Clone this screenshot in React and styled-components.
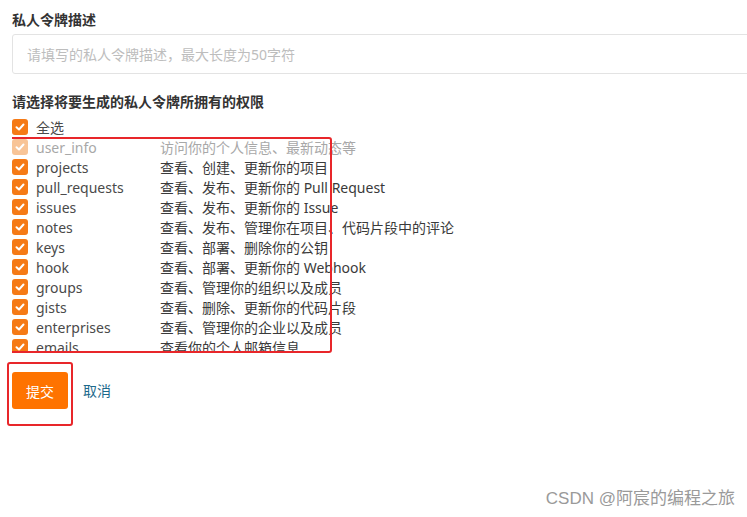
import styled, { createGlobalStyle } from 'styled-components';

const GlobalStyle = createGlobalStyle`
    body {
        margin : 0;
        background : #fff;
        font-family : "Noto Sans", "Noto Sans CJK SC", sans-serif;
        font-size : 14px;
        color : #333;
    }
`;

const perms = [
    { name: 'user_info', desc: '访问你的个人信息、最新动态等', disabled: true },
    { name: 'projects', desc: '查看、创建、更新你的项目' },
    { name: 'pull_requests', desc: '查看、发布、更新你的 Pull Request' },
    { name: 'issues', desc: '查看、发布、更新你的 Issue' },
    { name: 'notes', desc: '查看、发布、管理你在项目、代码片段中的评论' },
    { name: 'keys', desc: '查看、部署、删除你的公钥' },
    { name: 'hook', desc: '查看、部署、更新你的 Webhook' },
    { name: 'groups', desc: '查看、管理你的组织以及成员' },
    { name: 'gists', desc: '查看、删除、更新你的代码片段' },
    { name: 'enterprises', desc: '查看、管理你的企业以及成员' },
    { name: 'emails', desc: '查看你的个人邮箱信息' },
];

function Check({ disabled }) {
    return (
        <CheckBox $disabled={disabled}>
            <svg width="10" height="10" viewBox="0 0 10 10">
                <polyline points="1.5,5.2 4,7.5 8.5,2.5" fill="none" stroke="#fff" strokeWidth="2" strokeLinecap="round" strokeLinejoin="round" />
            </svg>
        </CheckBox>
    );
}

export default function App() {
    return (
        <Page>
            <GlobalStyle />
            <FieldLabel>私人令牌描述</FieldLabel>
            <TextInput type="text" placeholder="请填写的私人令牌描述，最大长度为50字符" />
            <FieldLabel $gap={18}>请选择将要生成的私人令牌所拥有的权限</FieldLabel>
            <Row $gap={5}>
                <Check />
                <Name>全选</Name>
            </Row>
            <PermList>
                {perms.map(p => (
                    <Row key={p.name}>
                        <Check disabled={p.disabled} />
                        <Name $muted={p.disabled}>{p.name}</Name>
                        <Desc $muted={p.disabled}>{p.desc}</Desc>
                    </Row>
                ))}
            </PermList>
            <Actions>
                <SubmitFrame>
                    <SubmitBtn>提交</SubmitBtn>
                </SubmitFrame>
                <CancelLink>取消</CancelLink>
            </Actions>
            <Watermark>CSDN @阿宸的编程之旅</Watermark>
        </Page>
    );
}

const Page = styled.div`
    position : relative;
    width : 747px;
    height : 517px;
    padding : 10px 0 0 12px;
    box-sizing : border-box;
    overflow : hidden;
`;

const FieldLabel = styled.div`
    font-weight : bold;
    line-height : 20px;
    color : #333;
    margin-top : ${p => p.$gap || 0}px;
`;

const TextInput = styled.input`
    display : block;
    margin-top : 4px;
    width : 760px;
    height : 40px;
    box-sizing : border-box;
    border : 1px solid #e3e3e3;
    border-radius : 3px;
    padding : 0 14px;
    font : inherit;
    background : #fff;
    outline : none;
    &::placeholder{
        color : #bdbdbd;
    }
`;

const Row = styled.div`
    display : flex;
    align-items : center;
    height : 20px;
    margin-top : ${p => p.$gap || 0}px;
`;

const CheckBox = styled.span`
    width : 16px;
    height : 16px;
    border-radius : 3px;
    background : ${p => p.$disabled ? '#f8c497' : '#f57a16'};
    display : flex;
    align-items : center;
    justify-content : center;
    flex-shrink : 0;
    margin-right : 8px;
`;

const Name = styled.span`
    width : 124px;
    color : ${p => p.$muted ? '#a8a8a8' : '#4a4a4a'};
    white-space : nowrap;
`;

const Desc = styled.span`
    color : ${p => p.$muted ? '#a8a8a8' : '#3a3a3a'};
    white-space : nowrap;
`;

// the list scrolls in the original page, so the last row is cut off
const PermList = styled.div`
    position : relative;
    height : 216px;
    overflow : hidden;

    &::after{
        content : '';
        position : absolute;
        left : -10px;
        top : 0;
        width : 330px;
        height : 216px;
        box-sizing : border-box;
        border : 2px solid #e8262a;
        border-radius : 3px;
    }
`;

const Actions = styled.div`
    display : flex;
    align-items : center;
    margin-top : 9px;
    margin-left : -5px;
`;

const SubmitFrame = styled.div`
    border : 2px solid #e8262a;
    border-radius : 3px;
    padding : 8px 3px 15px 3px;
`;

const SubmitBtn = styled.button`
    display : block;
    width : 56px;
    height : 37px;
    border : none;
    border-radius : 3px;
    background : #fe7300;
    color : #fff;
    font : inherit;
    font-size : 14px;
`;

const CancelLink = styled.a`
    margin-left : 10px;
    margin-top : -9px;
    color : #1d6a8c;
    cursor : pointer;
`;

const Watermark = styled.div`
    position : absolute;
    right : 12px;
    bottom : 8px;
    font-family : "Liberation Sans", "Noto Sans CJK SC", sans-serif;
    font-size : 17px;
    color : #9a9a9a;
    text-shadow : 0 0 2px #fff;
`;
